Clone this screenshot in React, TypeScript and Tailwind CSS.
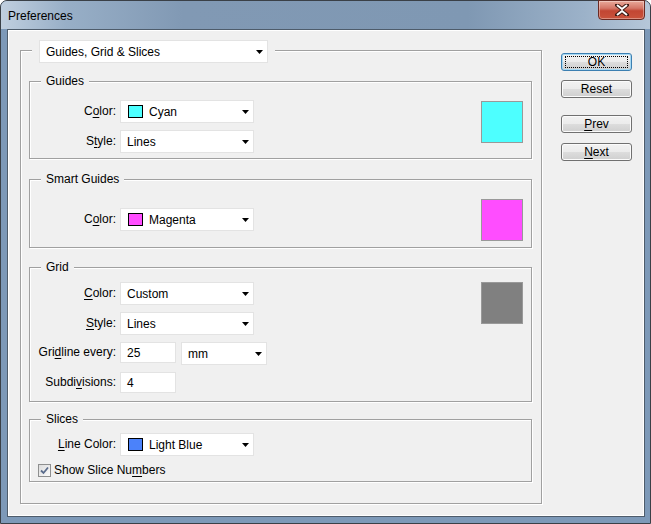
import type { ReactNode } from 'react';

const U = ({ children }: { children: ReactNode }) => (
  <span className="underline decoration-1 underline-offset-[2px]">{children}</span>
);

const Arrow = () => (
  <svg width="7" height="4" viewBox="0 0 7 4" className="ml-auto shrink-0">
    <path d="M0 0h7L3.5 4z" fill="#000" />
  </svg>
);

type SelectProps = { value: string; swatch?: string; className: string };

const Select = ({ value, swatch, className }: SelectProps) => (
  <div
    className={`flex h-[23px] shrink-0 items-center border border-[#e3e3e3] bg-white pr-[4px] ${className}`}
  >
    {swatch ? (
      <span className={`ml-[7px] mr-[6px] h-[13px] w-[15px] shrink-0 border border-black ${swatch}`} />
    ) : (
      <span className="w-[6px]" />
    )}
    <span className="whitespace-nowrap">{value}</span>
    <Arrow />
  </div>
);

const TextInput = ({ value }: { value: string }) => (
  <div className="flex h-[21px] w-[56px] items-center border border-[#e3e3e3] bg-white pl-[6px]">
    {value}
  </div>
);

const Row = ({ label, children, top }: { label: ReactNode; children: ReactNode; top?: boolean }) => (
  <div className={`flex ${top ? 'items-start' : 'items-center'}`}>
    <div className="w-[90px] whitespace-nowrap pr-[4px] text-right leading-[21px]">{label}</div>
    {children}
  </div>
);

type GroupProps = { title: string; className: string; children: ReactNode };

const Group = ({ title, className, children }: GroupProps) => (
  <div
    className={`relative w-[503px] border border-[#a0a0a0] shadow-[inset_1px_1px_0_#fff,1px_1px_0_#fff] ${className}`}
  >
    <span className="absolute -top-[8px] left-[11px] bg-[#f0f0f0] px-[5px] leading-[15px]">{title}</span>
    {children}
  </div>
);

const Preview = ({ color }: { color: string }) => (
  <div className={`h-[42px] w-[42px] shrink-0 border border-[#999] ${color}`} />
);

const Button = ({ children, isDefault }: { children: ReactNode; isDefault?: boolean }) => (
  <div
    className={`flex h-[18px] w-[71px] items-center justify-center rounded-[3px] border bg-[linear-gradient(#f2f2f2_0%,#ebebeb_50%,#dddddd_50%,#cfcfcf_100%)] ${
      isDefault
        ? 'border-[#3c7fb1] shadow-[inset_0_0_0_1px_#a6d9f4]'
        : 'border-[#707070] shadow-[inset_0_0_0_1px_#fbfbfb]'
    }`}
  >
    {isDefault ? (
      <span className="flex h-[12px] w-[63px] items-center justify-center border border-dotted border-black leading-none">
        {children}
      </span>
    ) : (
      children
    )}
  </div>
);

export default function App() {
  return (
    <div className="h-[524px] w-[651px] bg-white font-['Liberation_Sans',Arial,sans-serif] text-[12px] text-black">
      <div className="flex h-[524px] w-[651px] flex-col rounded-t-[7px] border border-[#3a4047] bg-[#7d99b8]">
        {/* title bar */}
        <div className="flex h-[28px] shrink-0 rounded-t-[6px] bg-[linear-gradient(to_right,#c0cfdf_0%,#98afc7_10%,#8199b4_28%,#7f98b3_72%,#9cb2c9_90%,#b6c7d9_100%)]">
          <span className="self-center pl-[7px] pt-[2px] text-[12px] text-black">Preferences</span>
          <div className="-mt-px ml-auto mr-[5px] flex h-[20px] w-[47px] items-center justify-center rounded-b-[4px] border border-[#6b2a22] bg-[linear-gradient(#e9a99a_0%,#d47667_40%,#c24633_55%,#c9533c_100%)] shadow-[inset_0_0_0_1px_rgba(255,255,255,0.35)]">
            <svg width="14" height="12" viewBox="0 0 14 12">
              <path
                d="M2 1l5 4 5-4M2 11l5-4 5 4"
                stroke="#3d1a14"
                strokeWidth="4"
                fill="none"
                strokeLinecap="square"
              />
              <path d="M2 1l5 4 5-4M2 11l5-4 5 4" stroke="#fff" strokeWidth="2" fill="none" />
            </svg>
          </div>
        </div>

        {/* client area */}
        <div className="ml-[6px] flex h-[488px] w-[638px] border border-[#4e5c6b] bg-[#f0f0f0] pl-[12px] pt-[20px] shadow-[inset_0_0_0_1px_#fff]">
          <div className="relative h-[454px] w-[522px] shrink-0 border border-[#a0a0a0] pl-[8px] shadow-[inset_1px_1px_0_#fff,1px_1px_0_#fff]">
            <div className="absolute -top-[11px] left-[11px] bg-[#f0f0f0] px-[7px]">
              <Select value="Guides, Grid & Slices" className="w-[229px]" />
            </div>

            <Group title="Guides" className="mt-[30px] h-[78px]">
              <div className="flex justify-between pr-[8px] pt-[18px]">
                <div className="flex flex-col gap-[7px]">
                  <Row label={<>C<U>o</U>lor:</>}>
                    <Select value="Cyan" swatch="bg-[#4dffff]" className="w-[134px]" />
                  </Row>
                  <Row label={<>S<U>t</U>yle:</>}>
                    <Select value="Lines" className="w-[134px]" />
                  </Row>
                </div>
                <div className="mt-[1px]">
                  <Preview color="bg-[#4dffff]" />
                </div>
              </div>
            </Group>

            <Group title="Smart Guides" className="mt-[20px] h-[69px]">
              <div className="flex justify-between pr-[8px] pt-[18px]">
                <Row label={<>C<U>o</U>lor:</>}>
                  <Select value="Magenta" swatch="bg-[#ff4dff]" className="w-[134px]" />
                </Row>
                <div className="mt-[1px]">
                  <Preview color="bg-[#ff4dff]" />
                </div>
              </div>
            </Group>

            <Group title="Grid" className="mt-[19px] h-[135px]">
              <div className="flex justify-between pr-[8px] pt-[14px]">
                <div className="flex flex-col gap-[7px]">
                  <Row label={<><U>C</U>olor:</>}>
                    <Select value="Custom" className="w-[134px]" />
                  </Row>
                  <Row label={<><U>S</U>tyle:</>}>
                    <Select value="Lines" className="w-[134px]" />
                  </Row>
                  <Row top label={<>Gri<U>d</U>line every:</>}>
                    <TextInput value="25" />
                    <Select value="mm" className="ml-[5px] w-[86px]" />
                  </Row>
                  <Row top label={<>Subdi<U>v</U>isions:</>}>
                    <TextInput value="4" />
                  </Row>
                </div>
                <div className="mt-0">
                  <Preview color="bg-[#808080]" />
                </div>
              </div>
            </Group>

            <Group title="Slices" className="mt-[17px] h-[63px]">
              <div className="pt-[13px]">
                <Row label={<><U>L</U>ine Color:</>}>
                  <Select value="Light Blue" swatch="bg-[#4b82fa]" className="w-[134px]" />
                </Row>
                <div className="mt-[7px] flex items-center pl-[8px]">
                  <span className="flex h-[13px] w-[13px] items-center justify-center border border-[#8e8f8f] bg-[linear-gradient(135deg,#dcdcdc,#fbfbfb)]">
                    <svg width="9" height="9" viewBox="0 0 9 9">
                      <path d="M1 4.5l2.5 2.5L8 1.5" stroke="#5a6c8c" strokeWidth="1.8" fill="none" />
                    </svg>
                  </span>
                  <span className="ml-[3px] leading-[15px]">
                    Show Slice Nu<U>m</U>bers
                  </span>
                </div>
              </div>
            </Group>
          </div>

          <div className="ml-[19px] mt-[3px] flex flex-col">
            <Button isDefault>OK</Button>
            <div className="mt-[9px]">
              <Button>Reset</Button>
            </div>
            <div className="mt-[17px]">
              <Button>
                <span>
                  <U>P</U>rev
                </span>
              </Button>
            </div>
            <div className="mt-[10px]">
              <Button>
                <span>
                  <U>N</U>ext
                </span>
              </Button>
            </div>
          </div>
        </div>
      </div>
    </div>
  );
}
